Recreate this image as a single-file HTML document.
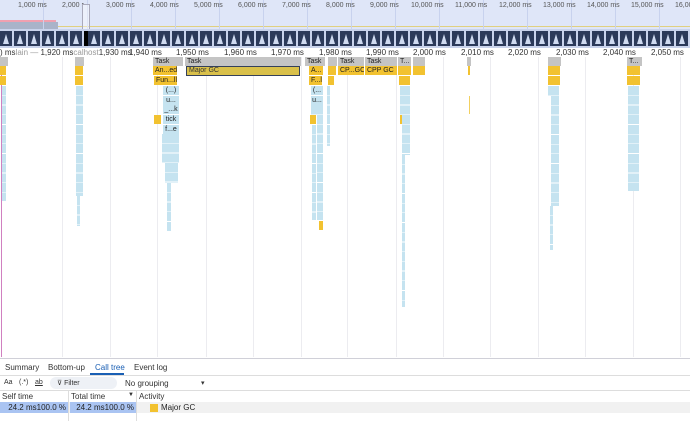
<!DOCTYPE html><html><head><style>
*{margin:0;padding:0;box-sizing:border-box}
body{width:690px;height:421px;overflow:hidden;background:#fff;font-family:"Liberation Sans",sans-serif;position:relative;font-size:8px;color:#333}
.a{position:absolute}
.ov{left:0;top:0;width:690px;height:29px;background:#dfe6f8}
.ol{top:0;height:29px;width:1px;background:#c8d2ee}
.olab{top:2px;font-size:7px;color:#555}
.fs{left:0;top:29px;width:690px;height:19px;background:#c9d3ec}
.fr{top:31px;width:12px;height:15px;background:#2c3a5a}
.fr::after{content:"";position:absolute;left:3px;top:3px;border-left:3px solid transparent;border-right:3px solid transparent;border-bottom:10px solid #cfdaf0}
.gl{top:57px;height:300px;width:1px;background:#ececf0}
.rl{top:48px;font-size:8px;color:#333}
.t{height:9px;background:#c4c4c4;font-size:7px;color:#222;padding-left:2px;line-height:9px;overflow:hidden;white-space:nowrap}
.y{height:9px;background:#f2c230;font-size:7px;color:#222;padding-left:2px;line-height:9px;overflow:hidden;white-space:nowrap}
.b{background:repeating-linear-gradient(to bottom,#c5e3f0 0 9px,#fff 9px 9.7px)}
.bl{height:9px;background:#c5e3f0;font-size:7px;color:#222;text-align:center;line-height:9px}
</style></head><body>
<div class="a ov"></div>
<div class="a" style="left:0;top:22px;width:58px;height:7px;background:#a9b3c9"></div>
<div class="a" style="left:0;top:20px;width:56px;height:2px;background:#f0a0b0"></div>
<div class="a" style="left:58px;top:26px;width:632px;height:1px;background:#e0d080"></div>
<div class="a ol" style="left:43px"></div><div class="a ol" style="left:87px"></div><div class="a ol" style="left:131px"></div><div class="a ol" style="left:175px"></div><div class="a ol" style="left:219px"></div><div class="a ol" style="left:263px"></div><div class="a ol" style="left:307px"></div><div class="a ol" style="left:351px"></div><div class="a ol" style="left:395px"></div><div class="a ol" style="left:439px"></div><div class="a ol" style="left:483px"></div><div class="a ol" style="left:527px"></div><div class="a ol" style="left:571px"></div><div class="a ol" style="left:615px"></div><div class="a ol" style="left:659px"></div>
<div class="a olab" style="left:18px">1,000 ms</div><div class="a olab" style="left:62px">2,000 r</div><div class="a olab" style="left:106px">3,000 ms</div><div class="a olab" style="left:150px">4,000 ms</div><div class="a olab" style="left:194px">5,000 ms</div><div class="a olab" style="left:238px">6,000 ms</div><div class="a olab" style="left:282px">7,000 ms</div><div class="a olab" style="left:326px">8,000 ms</div><div class="a olab" style="left:370px">9,000 ms</div><div class="a olab" style="left:411px">10,000 ms</div><div class="a olab" style="left:455px">11,000 ms</div><div class="a olab" style="left:499px">12,000 ms</div><div class="a olab" style="left:543px">13,000 ms</div><div class="a olab" style="left:587px">14,000 ms</div><div class="a olab" style="left:631px">15,000 ms</div><div class="a olab" style="left:675px">16,000</div>
<div class="a" style="left:82px;top:4px;width:8px;height:44px;border:1px solid #aab;background:rgba(255,255,255,.4)"></div>
<div class="a fs"></div>
<div id="frames"></div>
<div class="a fr" style="left:0"></div><div class="a fr" style="left:14px"></div><div class="a fr" style="left:28px"></div><div class="a fr" style="left:42px"></div><div class="a fr" style="left:56px"></div><div class="a fr" style="left:70px"></div><div class="a" style="left:84px;top:31px;width:4px;height:15px;background:#000"></div><div class="a fr" style="left:88px"></div><div class="a fr" style="left:102px"></div><div class="a fr" style="left:116px"></div><div class="a fr" style="left:130px"></div><div class="a fr" style="left:144px"></div><div class="a fr" style="left:158px"></div><div class="a fr" style="left:172px"></div><div class="a fr" style="left:186px"></div><div class="a fr" style="left:200px"></div><div class="a fr" style="left:214px"></div><div class="a fr" style="left:228px"></div><div class="a fr" style="left:242px"></div><div class="a fr" style="left:256px"></div><div class="a fr" style="left:270px"></div><div class="a fr" style="left:284px"></div><div class="a fr" style="left:298px"></div><div class="a fr" style="left:312px"></div><div class="a fr" style="left:326px"></div><div class="a fr" style="left:340px"></div><div class="a fr" style="left:354px"></div><div class="a fr" style="left:368px"></div><div class="a fr" style="left:382px"></div><div class="a fr" style="left:396px"></div><div class="a fr" style="left:410px"></div><div class="a fr" style="left:424px"></div><div class="a fr" style="left:438px"></div><div class="a fr" style="left:452px"></div><div class="a fr" style="left:466px"></div><div class="a fr" style="left:480px"></div><div class="a fr" style="left:494px"></div><div class="a fr" style="left:508px"></div><div class="a fr" style="left:522px"></div><div class="a fr" style="left:536px"></div><div class="a fr" style="left:550px"></div><div class="a fr" style="left:564px"></div><div class="a fr" style="left:578px"></div><div class="a fr" style="left:592px"></div><div class="a fr" style="left:606px"></div><div class="a fr" style="left:620px"></div><div class="a fr" style="left:634px"></div><div class="a fr" style="left:648px"></div><div class="a fr" style="left:662px"></div><div class="a fr" style="left:676px"></div>

<div class="a gl" style="left:62px"></div><div class="a gl" style="left:110px"></div><div class="a gl" style="left:157px"></div><div class="a gl" style="left:206px"></div><div class="a gl" style="left:253px"></div><div class="a gl" style="left:301px"></div><div class="a gl" style="left:347px"></div><div class="a gl" style="left:396px"></div><div class="a gl" style="left:443px"></div><div class="a gl" style="left:490px"></div><div class="a gl" style="left:538px"></div><div class="a gl" style="left:585px"></div><div class="a gl" style="left:633px"></div><div class="a gl" style="left:680px"></div>
<div class="a rl" style="left:0">) ms<span style="color:#999">lain — </span>1,920 ms<span style="color:#999">calhost</span>1,930 ms</div>
<div class="a rl" style="left:129px">1,940 ms</div><div class="a rl" style="left:176px">1,950 ms</div><div class="a rl" style="left:224px">1,960 ms</div><div class="a rl" style="left:271px">1,970 ms</div><div class="a rl" style="left:319px">1,980 ms</div><div class="a rl" style="left:366px">1,990 ms</div><div class="a rl" style="left:413px">2,000 ms</div><div class="a rl" style="left:461px">2,010 ms</div><div class="a rl" style="left:508px">2,020 ms</div><div class="a rl" style="left:556px">2,030 ms</div><div class="a rl" style="left:603px">2,040 ms</div><div class="a rl" style="left:651px">2,050 ms</div>
<div class="a" style="left:1px;top:57px;width:1px;height:300px;background:#d080c0"></div>

<!-- left stack -->
<div class="a t" style="left:0;top:57px;width:8px"></div>
<div class="a y" style="left:0;top:66px;width:6px"></div><div class="a y" style="left:0;top:76px;width:6px"></div>
<div class="a b" style="left:2px;top:86px;width:4px;height:115px"></div>
<!-- 75 -->
<div class="a t" style="left:75px;top:57px;width:9px"></div>
<div class="a y" style="left:75px;top:66px;width:8px"></div><div class="a y" style="left:75px;top:76px;width:8px"></div>
<div class="a b" style="left:76px;top:86px;width:7px;height:110px"></div>
<div class="a b" style="left:77px;top:196px;width:3px;height:30px"></div>
<!-- 153 -->
<div class="a t" style="left:153px;top:57px;width:30px">Task</div>
<div class="a y" style="left:153px;top:66px;width:24px">An...ed</div>
<div class="a y" style="left:154px;top:76px;width:23px">Fun...ll</div>
<div class="a bl" style="left:163px;top:86px;width:16px">(...)</div>
<div class="a bl" style="left:163px;top:96px;width:16px">u...</div>
<div class="a bl" style="left:163px;top:105px;width:16px">_...k</div>
<div class="a y" style="left:154px;top:115px;width:7px"></div><div class="a bl" style="left:163px;top:115px;width:16px">tick</div>
<div class="a bl" style="left:163px;top:125px;width:16px">f...e</div>
<div class="a b" style="left:162px;top:134px;width:17px;height:29px"></div>
<div class="a b" style="left:165px;top:163px;width:13px;height:20px"></div>
<div class="a b" style="left:167px;top:183px;width:4px;height:48px"></div>
<!-- Major GC -->
<div class="a t" style="left:185px;top:57px;width:116px">Task</div>
<div class="a" style="left:186px;top:66px;width:114px;height:10px;background:#d9c04a;border:1px solid #34405a;font-size:7px;line-height:8px;padding-left:2px;color:#333">Major GC</div>
<!-- 305 -->
<div class="a t" style="left:305px;top:57px;width:20px">Task</div>
<div class="a y" style="left:309px;top:66px;width:14px">A...</div>
<div class="a y" style="left:309px;top:76px;width:13px">F...l</div>
<div class="a bl" style="left:311px;top:86px;width:12px">(...</div>
<div class="a bl" style="left:311px;top:96px;width:12px">u...</div>
<div class="a b" style="left:311px;top:105px;width:12px;height:10px"></div>
<div class="a y" style="left:310px;top:115px;width:6px"></div>
<div class="a b" style="left:317px;top:115px;width:6px;height:105px"></div>
<div class="a b" style="left:312px;top:125px;width:4px;height:95px"></div>
<div class="a y" style="left:319px;top:221px;width:4px;height:9px"></div>
<div class="a b" style="left:327px;top:86px;width:3px;height:60px"></div>
<div class="a t" style="left:328px;top:57px;width:9px"></div>
<div class="a y" style="left:328px;top:66px;width:8px"></div><div class="a y" style="left:328px;top:76px;width:6px"></div>
<div class="a t" style="left:338px;top:57px;width:26px">Task</div>
<div class="a y" style="left:338px;top:66px;width:26px">CP...GC</div>
<div class="a t" style="left:365px;top:57px;width:32px">Task</div>
<div class="a y" style="left:365px;top:66px;width:32px">CPP GC</div>
<!-- 398 -->
<div class="a t" style="left:398px;top:57px;width:13px">T...</div><div class="a t" style="left:413px;top:57px;width:12px"></div>
<div class="a y" style="left:398px;top:66px;width:13px"></div><div class="a y" style="left:413px;top:66px;width:12px"></div>
<div class="a y" style="left:399px;top:76px;width:11px"></div>
<div class="a b" style="left:400px;top:86px;width:10px;height:30px"></div>
<div class="a y" style="left:400px;top:115px;width:3px"></div>
<div class="a b" style="left:402px;top:115px;width:8px;height:40px"></div>
<div class="a b" style="left:402px;top:155px;width:3px;height:152px"></div>
<!-- 467 -->
<div class="a t" style="left:467px;top:57px;width:4px"></div>
<div class="a y" style="left:468px;top:66px;width:2px"></div>
<div class="a" style="left:469px;top:96px;width:1px;height:18px;background:#f2d060"></div>
<!-- 548 -->
<div class="a t" style="left:548px;top:57px;width:13px"></div>
<div class="a y" style="left:548px;top:66px;width:12px"></div><div class="a y" style="left:548px;top:76px;width:12px"></div>
<div class="a b" style="left:548px;top:86px;width:11px;height:10px"></div>
<div class="a b" style="left:551px;top:96px;width:8px;height:110px"></div>
<div class="a b" style="left:550px;top:206px;width:3px;height:44px"></div>
<!-- 627 -->
<div class="a t" style="left:627px;top:57px;width:15px">T...</div>
<div class="a y" style="left:627px;top:66px;width:13px"></div><div class="a y" style="left:627px;top:76px;width:13px"></div>
<div class="a b" style="left:628px;top:86px;width:11px;height:105px"></div>

<!-- bottom panel -->
<div class="a" style="left:0;top:358px;width:690px;height:1px;background:#d0d0d8"></div>
<div class="a" style="left:0;top:359px;width:690px;height:16px;background:#fff;font-size:8px;color:#333">
<span class="a" style="left:5px;top:4px">Summary</span><span class="a" style="left:48px;top:4px">Bottom-up</span><span class="a" style="left:95px;top:4px;color:#1a5fb4">Call tree</span><span class="a" style="left:134px;top:4px">Event log</span>
<div class="a" style="left:90px;top:14px;width:34px;height:2px;background:#1a5fb4"></div></div>
<div class="a" style="left:0;top:375px;width:690px;height:1px;background:#ddd"></div>
<div class="a" style="left:0;top:376px;width:690px;height:14px;font-size:7px;color:#333">
<span class="a" style="left:4px;top:3px">Aa</span><span class="a" style="left:19px;top:3px">(.*)</span><span class="a" style="left:35px;top:3px;text-decoration:underline">ab</span>
<div class="a" style="left:50px;top:1px;width:67px;height:12px;border-radius:6px;background:#eef1f6"></div>
<span class="a" style="left:57px;top:3px">⊽ Filter</span>
<span class="a" style="left:125px;top:3px;font-size:8px">No grouping</span><span class="a" style="left:201px;top:3px">▾</span></div>
<div class="a" style="left:0;top:390px;width:690px;height:1px;background:#ddd"></div>
<div class="a" style="left:0;top:391px;width:690px;height:11px;font-size:8px;color:#333">
<span class="a" style="left:2px;top:1px">Self time</span><span class="a" style="left:71px;top:1px">Total time</span><span class="a" style="left:128px;top:1px;font-size:6px">▼</span><span class="a" style="left:139px;top:1px">Activity</span></div>
<div class="a" style="left:0;top:402px;width:690px;height:11px;background:#f1f1f1"></div>
<div class="a" style="left:0;top:402px;width:68px;height:11px;background:#aac4f2;font-size:8px;text-align:right;padding-right:2px;line-height:11px;color:#222">24.2 ms100.0 %</div>
<div class="a" style="left:70px;top:402px;width:66px;height:11px;background:#aac4f2;font-size:8px;text-align:right;padding-right:2px;line-height:11px;color:#222">24.2 ms100.0 %</div>
<div class="a" style="left:150px;top:404px;width:8px;height:8px;background:#f2c230"></div>
<span class="a" style="left:161px;top:403px;font-size:8px;color:#222">Major GC</span>
<div class="a" style="left:68px;top:391px;width:1px;height:30px;background:#ddd"></div>
<div class="a" style="left:136px;top:391px;width:1px;height:30px;background:#ddd"></div>
</body></html>
